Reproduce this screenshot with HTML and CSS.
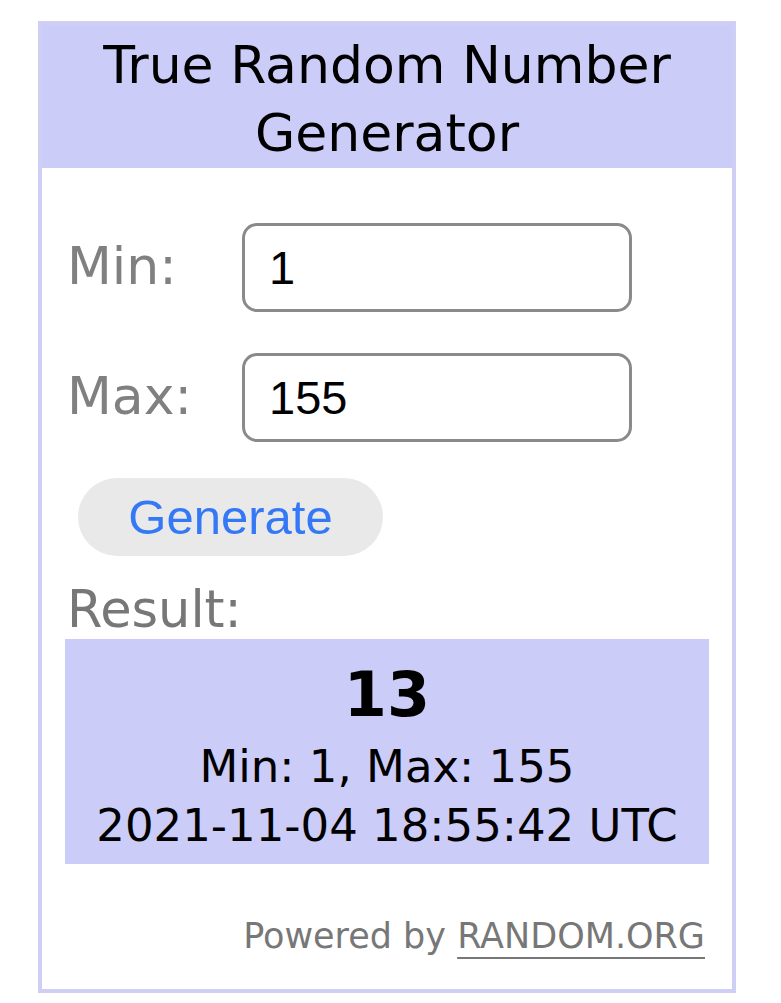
FILE: index.html
```html
<!DOCTYPE html>
<html lang="en">
<head>
  <meta charset="UTF-8">
  <title>True Random Number Generator</title>
  <link rel="stylesheet" href="styles.css">
</head>
<body>

  <!-- Widget -->
  <div class="widget">
    <div class="widget-title">True Random Number<br>Generator</div>

    <div class="widget-body">
      <div class="fields">
        <label class="field-label" for="minInput">Min:</label>
        <input class="field-input" type="text" id="minInput" value="1">
        <label class="field-label" for="maxInput">Max:</label>
        <input class="field-input" type="text" id="maxInput" value="155">
      </div>

      <button class="generate" onclick="generar()">Generate</button>

      <div class="result-label">Result:</div>
      <div class="result">
        <div class="result-number" id="resultNumber">13</div>
        <div class="result-line" id="resultRange">Min: 1, Max: 155</div>
        <div class="result-line" id="resultDate">2021-11-04 18:55:42 UTC</div>
      </div>

      <div class="powered">Powered by <a href="#">RANDOM.ORG</a></div>
    </div>
  </div>

  <script>
    function generar() {
      const min = parseInt(document.getElementById("minInput").value, 10);
      const max = parseInt(document.getElementById("maxInput").value, 10);
      if (isNaN(min) || isNaN(max) || min > max) return;
      const n = Math.floor(Math.random() * (max - min + 1)) + min;
      const d = new Date().toISOString().replace("T", " ").slice(0, 19);
      document.getElementById("resultNumber").innerText = n;
      document.getElementById("resultRange").innerText = "Min: " + min + ", Max: " + max;
      document.getElementById("resultDate").innerText = d + " UTC";
    }
  </script>

</body>
</html>
```

FILE: styles.css
```css
body {
  margin: 0;
  padding: 21px 0 0 38px;
  background: #fff;
  font-family: 'DejaVu Sans', Verdana, sans-serif;
}

.widget {
  width: 698px;
  box-sizing: border-box;
  border: 4px solid #cfcff6;
  background: #fff;
}

.widget-title {
  background: #ccccf8;
  color: #000;
  text-align: center;
  font-size: 52px;
  line-height: 68px;
  padding: 6px 0 1px;
}

.widget-body {
  padding: 0 23px 33px 25px;
}

.fields {
  display: grid;
  grid-template-columns: 175px 390px;
  row-gap: 41px;
  align-items: center;
  margin-top: 55px;
}

.field-label {
  color: #808080;
  font-size: 52px;
  margin-top: -4px;
}

.field-input {
  height: 89px;
  box-sizing: border-box;
  border: 3px solid #8a8a8a;
  border-radius: 15px;
  padding: 0 24px;
  font-family: 'Liberation Sans', Arial, sans-serif;
  font-size: 47px;
  color: #000;
  background: #fff;
  outline: none;
}

.generate {
  display: block;
  margin: 36px 0 0 11px;
  width: 305px;
  height: 78px;
  border: none;
  border-radius: 39px;
  background: #e9e9e9;
  color: #3478f6;
  font-family: 'Liberation Sans', Arial, sans-serif;
  font-size: 49px;
  cursor: pointer;
}

.result-label {
  margin-top: 24px;
  color: #777;
  font-size: 51px;
}

.result {
  background: #ccccf8;
  color: #000;
  text-align: center;
  margin-left: -2px;
  padding: 20px 0 9px;
}

.result-number {
  font-size: 62px;
  font-weight: bold;
  line-height: 72px;
  margin-bottom: 6px;
}

.result-line {
  font-size: 45px;
  line-height: 59px;
}

.powered {
  margin-top: 52px;
  text-align: right;
  color: #777;
  font-size: 35px;
  padding-right: 4px;
}

.powered a {
  color: #777;
  text-decoration-thickness: 2px;
  text-underline-offset: 9px;
}
```
